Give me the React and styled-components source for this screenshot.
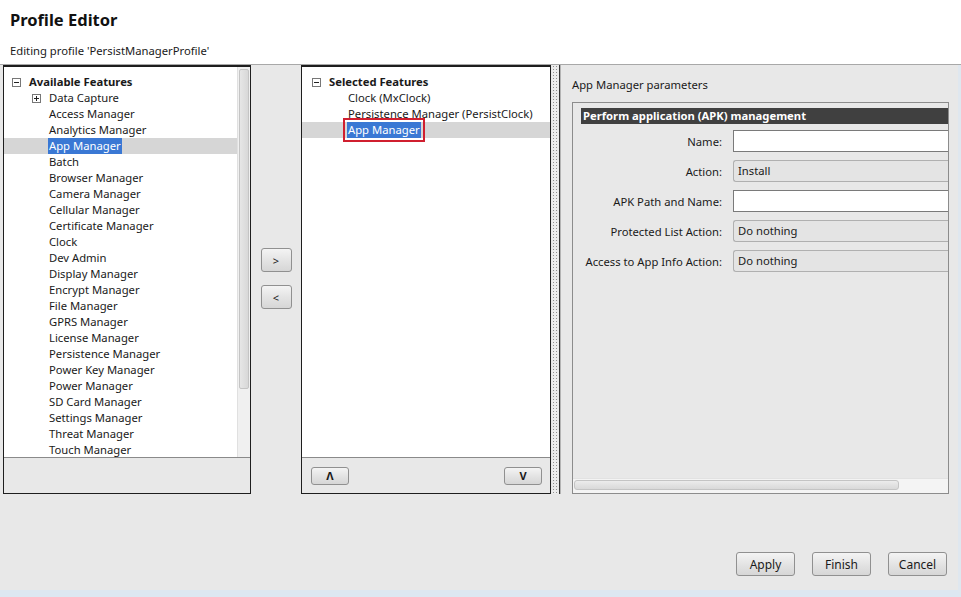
import styled, { createGlobalStyle } from 'styled-components'

const GlobalStyle = createGlobalStyle`
  html, body { margin: 0; padding: 0; }
  body {
    font-family: "Noto Sans", "Liberation Sans", sans-serif;
    font-size: 11.25px;
    color: #1a1a1a;
    background: #e8e8e8;
  }
`

const Window = styled.div`
  width: 961px;
  height: 597px;
  display: flex;
  flex-direction: column;
  background: #e8e8e8;
  overflow: hidden;
`

const Header = styled.div`
  height: 65px;
  background: #fff;
  border-bottom: 1px solid #a8a8a8;
  box-sizing: border-box;
  padding: 9px 10px 0;
  flex-shrink: 0;
`

const Title = styled.div`
  font-size: 16.5px;
  font-weight: bold;
  line-height: 22px;
  color: #111;
`

const Subtitle = styled.div`
  margin-top: 12px;
  font-size: 11.25px;
  line-height: 16px;
`

const Body = styled.div`
  flex: 1;
  display: flex;
  flex-direction: column;
  border-right: 3px solid #dfe7ef;
  border-bottom: 7px solid #dde7f1;
`

const Panels = styled.div`
  display: flex;
  height: 429px;
  padding-left: 3px;
`

const ListPanel = styled.div`
  width: ${p => p.$w}px;
  flex-shrink: 0;
  box-sizing: border-box;
  border: 1px solid #1e1e1e;
  border-top-width: 2px;
  display: flex;
  flex-direction: column;
  background: #e8e8e8;
`

const ListArea = styled.div`
  height: 390px;
  display: flex;
  background: #fff;
  border-bottom: 1px solid #8a8a8a;
`

const Tree = styled.div`
  flex: 1;
  padding-top: 7px;
  overflow: hidden;
`

const Row = styled.div`
  height: 16px;
  line-height: 16px;
  display: flex;
  align-items: center;
  padding-left: ${p => p.$indent}px;
  background: ${p => (p.$selected ? '#d6d6d6' : 'transparent')};
  white-space: nowrap;
  font-weight: ${p => (p.$bold ? 'bold' : 'normal')};
`

const Toggle = styled.span`
  width: 7px;
  height: 7px;
  border: 1px solid #777;
  position: relative;
  margin-right: 8px;
  flex-shrink: 0;
  background: #fff;
  &::before {
    content: '';
    position: absolute;
    left: 1px;
    right: 1px;
    top: 3px;
    height: 1px;
    background: #222;
  }
  &::after {
    content: '';
    position: absolute;
    top: 1px;
    bottom: 1px;
    left: 3px;
    width: 1px;
    background: #222;
    display: ${p => (p.$plus ? 'block' : 'none')};
  }
`

const Label = styled.span`
  padding: 0 1px;
  background: ${p => (p.$hl ? '#3a78d4' : 'transparent')};
  color: ${p => (p.$hl ? '#fff' : 'inherit')};
  outline: ${p => (p.$boxed ? '2px solid #d01f2f' : 'none')};
  outline-offset: 2px;
`

const VScroll = styled.div`
  width: 13px;
  background: #f0f0f0;
  border-left: 1px solid #e0e0e0;
  padding: 2px 1px 0;
  box-sizing: border-box;
`

const VThumb = styled.div`
  height: 318px;
  border: 1px solid #c4c4c4;
  border-radius: 2px;
  background: linear-gradient(to right, #e6e6e6, #d8d8d8);
`

const ListFooter = styled.div`
  flex: 1;
  display: flex;
  align-items: center;
  justify-content: space-between;
  padding: 0 8px 0 9px;
`

const MoveColumn = styled.div`
  width: 50px;
  flex-shrink: 0;
  display: flex;
  flex-direction: column;
  align-items: center;
  padding-top: 183px;
  gap: 13px;
  box-sizing: border-box;
`

const Button = styled.button`
  width: ${p => p.$w || 59}px;
  height: ${p => p.$h || 24}px;
  padding: 0;
  border: 1px solid #909090;
  border-radius: 3px;
  background: linear-gradient(#f4f4f4, #e4e4e4 50%, #d6d6d6);
  font-family: inherit;
  font-size: ${p => p.$fs || 12}px;
  font-weight: ${p => (p.$bold ? 'bold' : 'normal')};
  color: #1a1a1a;
  box-sizing: border-box;
`

const Splitter = styled.div`
  width: 7px;
  margin: 0 0 0 1px;
  border-right: 1px solid #333;
  background-color: #ebebeb;
  background-image: radial-gradient(#8f8f8f 0.6px, transparent 0.7px);
  background-size: 3px 3px;
  flex-shrink: 0;
`

const ParamsPanel = styled.div`
  flex: 1;
  padding: 12px 0 0 11px;
  border-left: 1px solid #b4b4b4;
  display: flex;
  flex-direction: column;
  min-width: 0;
`

const ParamsTitle = styled.div`
  height: 16px;
  line-height: 16px;
  margin-bottom: 9px;
`

const GroupBox = styled.div`
  flex: 1;
  width: 377px;
  border: 1px solid #8c8c8c;
  border-bottom: none;
  display: flex;
  flex-direction: column;
  overflow: hidden;
  box-sizing: border-box;
`

const GroupContent = styled.div`
  flex: 1;
  padding: 5px 0 0 8px;
`

const GroupBar = styled.div`
  height: 16px;
  line-height: 16px;
  background: #404040;
  color: #fff;
  font-weight: bold;
  padding-left: 2px;
  margin-bottom: 6px;
  white-space: nowrap;
`

const FieldRow = styled.div`
  display: grid;
  grid-template-columns: 141px 1fr;
  column-gap: 11px;
  align-items: center;
  height: 22px;
  margin-bottom: 8px;
`

const FieldLabel = styled.div`
  text-align: right;
  white-space: nowrap;
`

const FieldInput = styled.div`
  height: 22px;
  box-sizing: border-box;
  border: 1px solid ${p => (p.$combo ? '#b0b0b0' : '#7a7a7a')};
  border-right: none;
  border-radius: ${p => (p.$combo ? '3px 0 0 3px' : '0')};
  background: ${p => (p.$combo ? '#e4e4e4' : '#fff')};
  padding-left: 4px;
  line-height: 20px;
  white-space: nowrap;
`

const HScroll = styled.div`
  height: 13px;
  background: #f4f4f4;
  border-top: 1px solid #e2e2e2;
  border-bottom: 1px solid #8c8c8c;
  padding: 1px 0 0 1px;
`

const HThumb = styled.div`
  width: 325px;
  height: 10px;
  border: 1px solid #c4c4c4;
  border-radius: 3px;
  background: linear-gradient(#ececec, #d9d9d9);
  box-sizing: border-box;
`

const Footer = styled.div`
  flex: 1;
  display: flex;
  justify-content: flex-end;
  align-items: flex-start;
  gap: 17px;
  padding: 58px 11px 0 0;
`

const available = [
  'Access Manager', 'Analytics Manager', 'App Manager', 'Batch', 'Browser Manager',
  'Camera Manager', 'Cellular Manager', 'Certificate Manager', 'Clock', 'Dev Admin',
  'Display Manager', 'Encrypt Manager', 'File Manager', 'GPRS Manager', 'License Manager',
  'Persistence Manager', 'Power Key Manager', 'Power Manager', 'SD Card Manager',
  'Settings Manager', 'Threat Manager', 'Touch Manager',
]

const selected = ['Clock (MxClock)', 'Persistence Manager (PersistClock)', 'App Manager']

const fields = [
  { label: 'Name:', value: '' },
  { label: 'Action:', value: 'Install', combo: true },
  { label: 'APK Path and Name:', value: '' },
  { label: 'Protected List Action:', value: 'Do nothing', combo: true },
  { label: 'Access to App Info Action:', value: 'Do nothing', combo: true },
]

function App() {
  return (
    <>
      <GlobalStyle />
      <Window>
        <Header>
          <Title>Profile Editor</Title>
          <Subtitle>Editing profile 'PersistManagerProfile'</Subtitle>
        </Header>
        <Body>
          <Panels>
            <ListPanel $w={248}>
              <ListArea>
                <Tree>
                  <Row $indent={8} $bold>
                    <Toggle />
                    Available Features
                  </Row>
                  <Row $indent={28}>
                    <Toggle $plus />
                    Data Capture
                  </Row>
                  {available.map(name => (
                    <Row key={name} $indent={44} $selected={name === 'App Manager'}>
                      <Label $hl={name === 'App Manager'}>{name}</Label>
                    </Row>
                  ))}
                </Tree>
                <VScroll>
                  <VThumb />
                </VScroll>
              </ListArea>
              <ListFooter />
            </ListPanel>

            <MoveColumn>
              <Button $w={31} $h={24} $fs={11}>&gt;</Button>
              <Button $w={31} $h={24} $fs={11}>&lt;</Button>
            </MoveColumn>

            <ListPanel $w={250}>
              <ListArea>
                <Tree>
                  <Row $indent={10} $bold>
                    <Toggle />
                    Selected Features
                  </Row>
                  {selected.map(name => (
                    <Row key={name} $indent={45} $selected={name === 'App Manager'}>
                      <Label $hl={name === 'App Manager'} $boxed={name === 'App Manager'}>{name}</Label>
                    </Row>
                  ))}
                </Tree>
              </ListArea>
              <ListFooter>
                <Button $w={38} $h={18} $fs={11} $bold>Λ</Button>
                <Button $w={38} $h={18} $fs={11} $bold>V</Button>
              </ListFooter>
            </ListPanel>

            <Splitter />

            <ParamsPanel>
              <ParamsTitle>App Manager parameters</ParamsTitle>
              <GroupBox>
                <GroupContent>
                  <GroupBar>Perform application (APK) management</GroupBar>
                  {fields.map(f => (
                    <FieldRow key={f.label}>
                      <FieldLabel>{f.label}</FieldLabel>
                      <FieldInput $combo={f.combo}>{f.value}</FieldInput>
                    </FieldRow>
                  ))}
                </GroupContent>
                <HScroll>
                  <HThumb />
                </HScroll>
              </GroupBox>
            </ParamsPanel>
          </Panels>

          <Footer>
            <Button>Apply</Button>
            <Button>Finish</Button>
            <Button>Cancel</Button>
          </Footer>
        </Body>
      </Window>
    </>
  )
}

export default App
